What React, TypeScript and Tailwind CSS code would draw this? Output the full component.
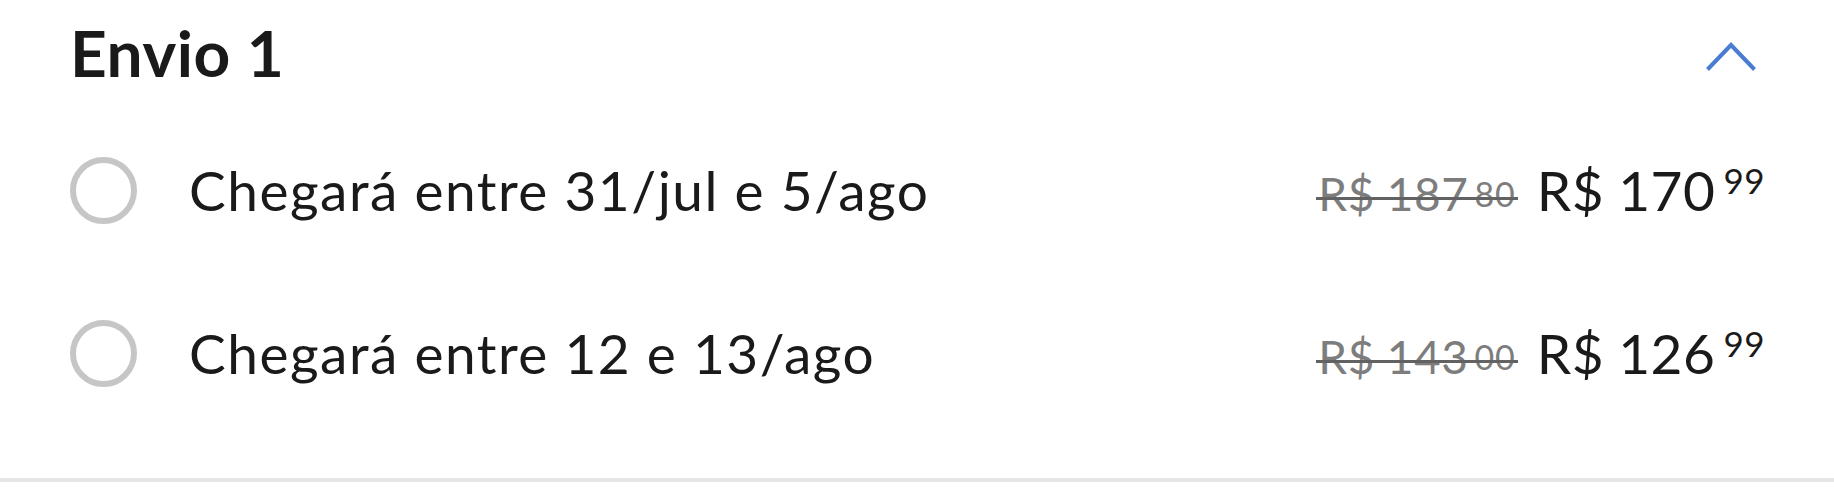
import React from "react";

type Option = {
  label: string;
  oldInt: string;
  oldCents: string;
  newInt: string;
  newCents: string;
};

const options: Option[] = [
  { label: "Chegará entre 31/jul e 5/ago", oldInt: "187", oldCents: "80", newInt: "170", newCents: "99" },
  { label: "Chegará entre 12 e 13/ago", oldInt: "143", oldCents: "00", newInt: "126", newCents: "99" },
];

function ChevronUp() {
  return (
    <svg width="52" height="32" viewBox="0 0 52 32" fill="none" aria-hidden="true">
      <path d="M2.5 28.5 L26 4 L49.5 28.5" stroke="#4a7dd2" strokeWidth="4" strokeLinecap="butt" strokeLinejoin="miter" />
    </svg>
  );
}

function Radio() {
  return <div className="w-[67px] h-[67px] rounded-full border-[6px] border-[#c6c6c6] shrink-0" />;
}

function OldPrice({ int, cents }: { int: string; cents: string }) {
  return (
    <div className="relative flex items-baseline text-[#7d7d7d]">
      <span className="text-[46px] leading-none tracking-[0.5px]">
        R$<span className="ml-[12px]">{int}</span>
      </span>
      <span className="text-[34px] leading-none ml-[6px] relative top-[-4px] tracking-[1px]">{cents}</span>
      <div className="absolute left-[-2px] right-[-2px] top-[26px] h-[3px] bg-[#626262]" />
    </div>
  );
}

function NewPrice({ int, cents }: { int: string; cents: string }) {
  return (
    <div className="flex items-baseline text-[#1a1a1a]">
      <span className="text-[55px] leading-none tracking-[0.5px]">
        R$<span className="ml-[14px]">{int}</span>
      </span>
      <span className="text-[35px] leading-none ml-[8px] relative top-[-17px] tracking-[0.5px]">{cents}</span>
    </div>
  );
}

export default function App() {
  return (
    <div
      className="w-[1834px] h-[500px] bg-white flex flex-col"
      style={{ fontFamily: "Lato, 'Open Sans', Arial, sans-serif" }}
    >
      <div className="px-[70px] flex flex-col">
        <header className="h-[109px] pt-[21px] flex items-start justify-between">
          <h2 className="text-[64px] leading-[64px] font-bold text-[#1a1a1a] tracking-[0.5px]">Envio 1</h2>
          <div className="mt-[20px] mr-[7px]">
            <ChevronUp />
          </div>
        </header>

        {options.map((o) => (
          <div key={o.label} className="h-[163px] flex items-center justify-between">
            <div className="flex items-center">
              <Radio />
              <span className="ml-[52px] text-[55px] leading-none text-[#1a1a1a] tracking-[1.5px]">{o.label}</span>
            </div>
            <div className="flex items-baseline gap-[21px] mr-[-1px]">
              <OldPrice int={o.oldInt} cents={o.oldCents} />
              <NewPrice int={o.newInt} cents={o.newCents} />
            </div>
          </div>
        ))}
      </div>

      <div className="mt-[43px] h-[4px] bg-[#e6e6e6]" />
    </div>
  );
}
